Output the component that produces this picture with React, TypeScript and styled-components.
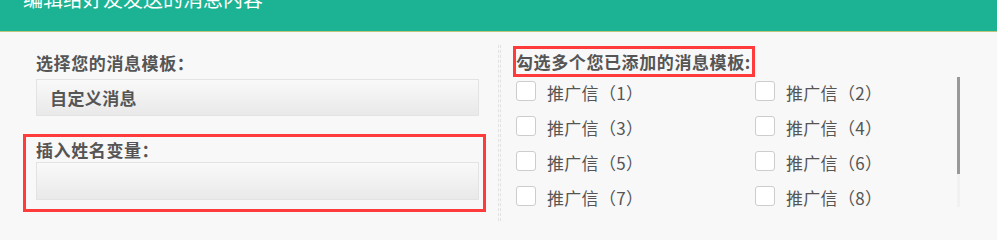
import React from 'react';
import styled, { createGlobalStyle } from 'styled-components';

const GlobalStyle = createGlobalStyle`
    html, body {
        margin: 0;
        padding: 0;
        background: #f8f8f8;
    }
    body {
        font-family: "Noto Sans CJK SC", "Noto Sans", sans-serif;
        color: #555;
    }
`;

const Page = styled.div`
    width: 997px;
    height: 221px;
    overflow: hidden;
    background: #f8f8f8;
`;

const Header = styled.div`
    height: 31px;
    background: #1bb394;
    border-bottom: 1px solid #b9c47c;
    overflow: hidden;
    padding-left: 23px;
`;

const Title = styled.div`
    margin-top: -11px;
    font-size: 20px;
    line-height: 20px;
    color: #fff;
`;

const Body = styled.div`
    display: flex;
    align-items: stretch;
    height: 189px;
`;

const LeftCol = styled.div`
    width: 498px;
    box-sizing: border-box;
    padding: 16px 0 0 23px;
`;

const Divider = styled.div`
    width: 1px;
    margin-top: 13px;
    border-left: 1px dashed #e2e2e2;
    border-right: 1px dashed #e2e2e2;
`;

const RightCol = styled.div`
    flex: 1;
    padding: 14px 0 0 12px;
`;

const Field = styled.div<{ $marked?: boolean }>`
    box-sizing: border-box;
    width: 463px;
    padding: ${({ $marked }) => ($marked ? '1px 4px 9px 10px' : '0 4px 0 10px')};
    border: 3px solid ${({ $marked }) => ($marked ? '#ff3b3b' : 'transparent')};
    margin-bottom: ${({ $marked }) => ($marked ? '0' : '15px')};
`;

const Label = styled.div`
    font-size: 17px;
    line-height: 24px;
    font-weight: bold;
    letter-spacing: 0.6px;
    color: #555;
`;

const SelectBox = styled.div<{ $gap?: number }>`
    box-sizing: border-box;
    height: ${({ $gap }) => ($gap ? 37 : 38)}px;
    margin-top: ${({ $gap }) => $gap ?? 0}px;
    border: 1px solid #e3e3e3;
    background: linear-gradient(#f9f9f9, #e9e9e9);
    padding-left: 13px;
    display: flex;
    align-items: center;
    font-size: 17px;
    font-weight: bold;
    letter-spacing: 0.4px;
    color: #555;
`;

const MarkedLabel = styled.div`
    width: fit-content;
    border: 3px solid #ff3b3b;
    padding: 0 1px 0 0;
    font-size: 17px;
    line-height: 25px;
    font-weight: bold;
    color: #555;
    letter-spacing: 0.6px;
`;

const ListWrap = styled.div`
    position: relative;
    margin: 0 0 0 3px;
    width: 444px;
    height: 131px;
`;

const List = styled.div`
    display: grid;
    grid-template-columns: 239px 1fr;
    grid-auto-rows: 35px;
    padding-top: 4px;
`;

const Item = styled.label`
    display: flex;
    align-items: flex-start;
    gap: 11px;
`;

const Box = styled.span`
    box-sizing: border-box;
    width: 20px;
    height: 20px;
    border: 1px solid #cdcdcd;
    border-radius: 3px;
    background: #fff;
    flex: none;
`;

const ItemText = styled.span`
    margin-top: 2px;
    font-size: 17px;
    line-height: 20px;
    letter-spacing: 0.3px;
    color: #555;
`;

const Track = styled.div`
    position: absolute;
    right: 0;
    top: 0;
    width: 3px;
    height: 130px;
    background: #f1f1f1;
`;

const Thumb = styled.div`
    width: 3px;
    height: 97px;
    background: #999;
`;

const templates = Array.from({ length: 8 }, (_, i) => `推广信（${i + 1}）`);

export default function App() {
    return (
        <Page>
            <GlobalStyle />
            <Header>
                <Title>编辑给好友发送的消息内容</Title>
            </Header>
            <Body>
                <LeftCol>
                    <Field>
                        <Label>选择您的消息模板：</Label>
                        <SelectBox $gap={4}>自定义消息</SelectBox>
                    </Field>
                    <Field $marked>
                        <Label>插入姓名变量：</Label>
                        <SelectBox />
                    </Field>
                </LeftCol>
                <Divider />
                <RightCol>
                    <MarkedLabel>勾选多个您已添加的消息模板:</MarkedLabel>
                    <ListWrap>
                        <List>
                            {templates.map((t) => (
                                <Item key={t}>
                                    <Box />
                                    <ItemText>{t}</ItemText>
                                </Item>
                            ))}
                        </List>
                        <Track>
                            <Thumb />
                        </Track>
                    </ListWrap>
                </RightCol>
            </Body>
        </Page>
    );
}
